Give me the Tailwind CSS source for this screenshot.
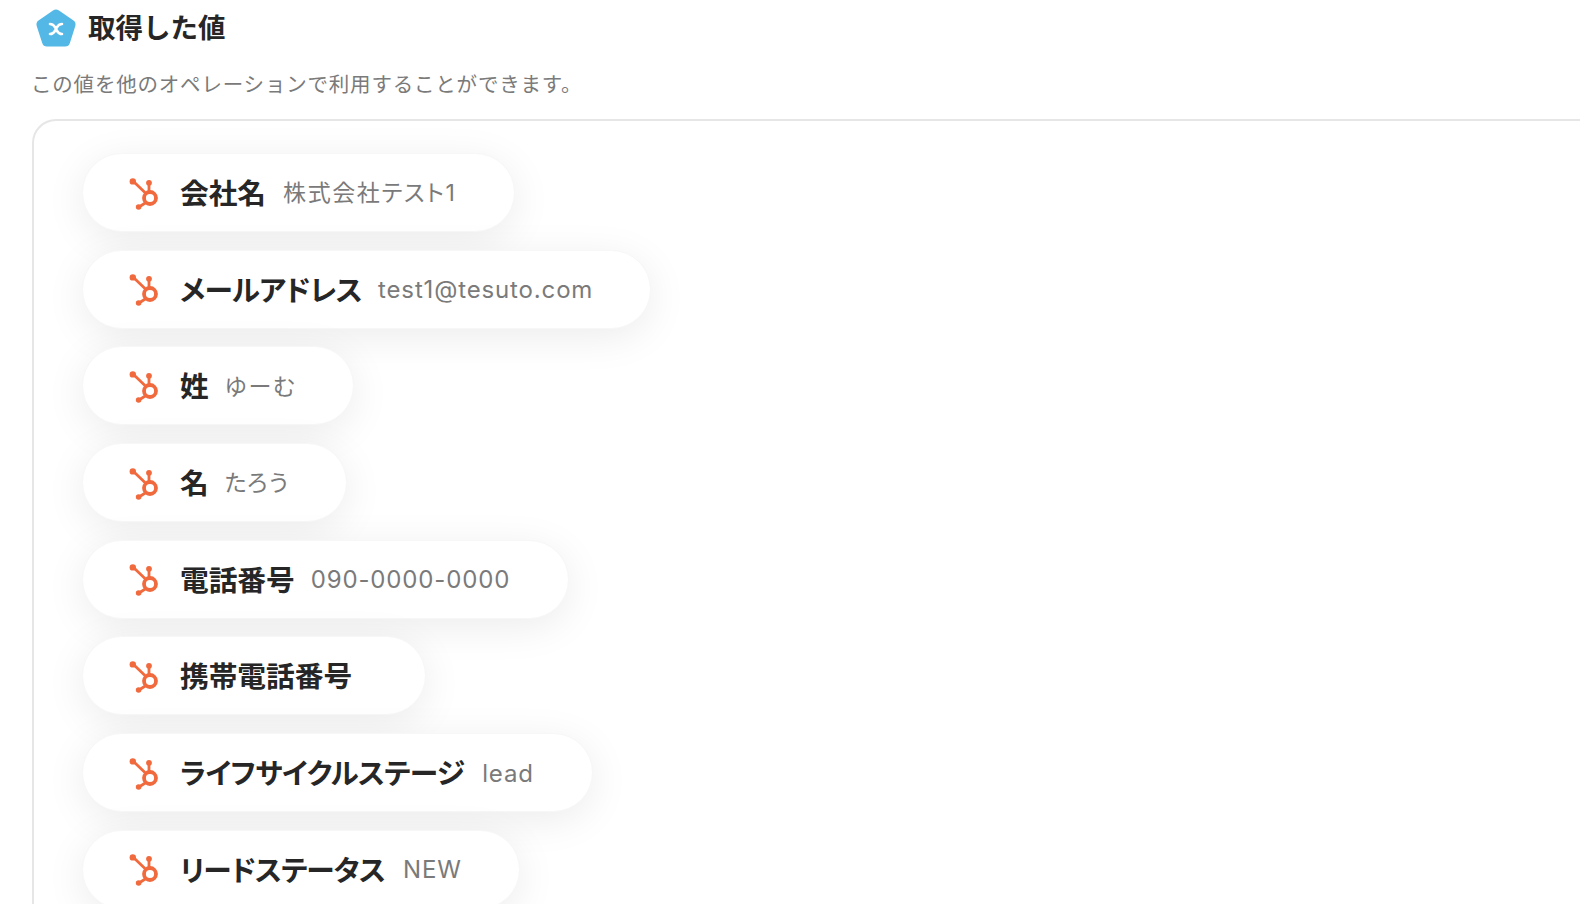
<!DOCTYPE html>
<html lang="ja">
<head>
  <meta charset="UTF-8">
  <title>取得した値</title>
  <script src="https://cdn.jsdelivr.net/npm/@tailwindcss/browser@4"></script>
</head>
<body class="bg-white text-[#262626] font-['Inter','Noto_Sans_CJK_JP',sans-serif] h-[904px] overflow-hidden">
  <svg class="hidden">
    <symbol id="hubspot" viewBox="0 0 32 32">
      <g fill="none" stroke="#f16a3e" stroke-linecap="round">
        <circle cx="21" cy="20" r="6" stroke-width="3.800"/>
        <path d="M4.500 3.500 17 15.500M20 14V6M17 24.500 10 29" stroke-width="2.800"/>
      </g>
      <g fill="#f16a3e">
        <circle cx="3.800" cy="3.400" r="3.200"/>
        <circle cx="20" cy="4.800" r="2.900"/>
        <circle cx="9.600" cy="29" r="2.800"/>
      </g>
    </symbol>
  </svg>
  <main class="pl-8">
    <h2 class="flex items-center gap-[11px] pl-[3px] h-[56px] pb-[1px] text-[27.500px] font-bold leading-none">
      <svg class="w-[42px] h-[40px]" viewBox="0 0 42 40">
        <path d="M18 2.600a5 5 0 0 1 6 0l14.500 10a5 5 0 0 1 1.800 5.400l-5.400 17a5 5 0 0 1-4.800 3.600H12a5 5 0 0 1-4.800-3.600L1.700 18a5 5 0 0 1 1.800-5.400Z" fill="#53b8e6"/>
        <path d="M15 16c4 0 4.500 2.500 6 5s2 5 6 5M27 16c-4 0-4.500 2.500-6 5s-2 5-6 5" fill="none" stroke="#fff" stroke-width="2.600" stroke-linecap="round"/>
      </svg>
      <span class="pt-[2px]">取得した値</span>
    </h2>
    <p class="mt-[15px] -ml-[1px] text-[20.500px] leading-[28px] tracking-[0.8px] text-[#7a7a7a]">この値を他のオペレーションで利用することができます。</p>
    <section class="mt-[20px] h-[900px] border-2 border-r-0 border-[#e6e6e6] rounded-l-[24px] pl-[48px] pt-[32px] flex flex-col items-start gap-[17.700px] [font-feature-settings:'palt']">
      <div class="h-[79px] pt-[2px] pl-[46px] flex items-center rounded-full bg-white border border-[#f7f7f7] shadow-[0_8px_40px_rgba(0,0,0,0.08)] w-[433px]">
        <svg class="w-[32px] h-[32px] shrink-0"><use href="#hubspot"/></svg>
        <span class="ml-[19px] text-[28.700px] font-bold">会社名</span>
        <span class="ml-[17px] text-[23px] tracking-[1.600px] text-[#7a7a7a]">株式会社テスト1</span>
      </div>
      <div class="h-[79px] pt-[2px] pl-[46px] flex items-center rounded-full bg-white border border-[#f7f7f7] shadow-[0_8px_40px_rgba(0,0,0,0.08)] w-[569px]">
        <svg class="w-[32px] h-[32px] shrink-0"><use href="#hubspot"/></svg>
        <span class="ml-[19px] text-[28.700px] font-bold tracking-[-0.700px]">メールアドレス</span>
        <span class="ml-[16px] text-[24px] tracking-[0.850px] text-[#7a7a7a]">test1@tesuto.com</span>
      </div>
      <div class="h-[79px] pt-[2px] pl-[46px] flex items-center rounded-full bg-white border border-[#f7f7f7] shadow-[0_8px_40px_rgba(0,0,0,0.08)] w-[272px]">
        <svg class="w-[32px] h-[32px] shrink-0"><use href="#hubspot"/></svg>
        <span class="ml-[19px] text-[28.700px] font-bold">姓</span>
        <span class="ml-[16px] text-[23px] tracking-[1.700px] text-[#7a7a7a]">ゆーむ</span>
      </div>
      <div class="h-[79px] pt-[2px] pl-[46px] flex items-center rounded-full bg-white border border-[#f7f7f7] shadow-[0_8px_40px_rgba(0,0,0,0.08)] w-[265px]">
        <svg class="w-[32px] h-[32px] shrink-0"><use href="#hubspot"/></svg>
        <span class="ml-[19px] text-[28.700px] font-bold">名</span>
        <span class="ml-[16px] text-[23px] tracking-[1.700px] text-[#7a7a7a]">たろう</span>
      </div>
      <div class="h-[79px] pt-[2px] pl-[46px] flex items-center rounded-full bg-white border border-[#f7f7f7] shadow-[0_8px_40px_rgba(0,0,0,0.08)] w-[487px]">
        <svg class="w-[32px] h-[32px] shrink-0"><use href="#hubspot"/></svg>
        <span class="ml-[19px] text-[28.700px] font-bold">電話番号</span>
        <span class="ml-[16px] text-[24px] tracking-[0.850px] text-[#7a7a7a]">090-0000-0000</span>
      </div>
      <div class="h-[79px] pt-[2px] pl-[46px] flex items-center rounded-full bg-white border border-[#f7f7f7] shadow-[0_8px_40px_rgba(0,0,0,0.08)] w-[344px]">
        <svg class="w-[32px] h-[32px] shrink-0"><use href="#hubspot"/></svg>
        <span class="ml-[19px] text-[28.700px] font-bold">携帯電話番号</span>
      </div>
      <div class="h-[79px] pt-[2px] pl-[46px] flex items-center rounded-full bg-white border border-[#f7f7f7] shadow-[0_8px_40px_rgba(0,0,0,0.08)] w-[511px]">
        <svg class="w-[32px] h-[32px] shrink-0"><use href="#hubspot"/></svg>
        <span class="ml-[19px] text-[28.700px] font-bold tracking-[-0.640px]">ライフサイクルステージ</span>
        <span class="ml-[18px] text-[24px] tracking-[0.850px] text-[#7a7a7a]">lead</span>
      </div>
      <div class="h-[79px] pt-[2px] pl-[46px] flex items-center rounded-full bg-white border border-[#f7f7f7] shadow-[0_8px_40px_rgba(0,0,0,0.08)] w-[438px]">
        <svg class="w-[32px] h-[32px] shrink-0"><use href="#hubspot"/></svg>
        <span class="ml-[19px] text-[28.700px] font-bold tracking-[-0.880px]">リードステータス</span>
        <span class="ml-[18px] text-[24px] tracking-[0.850px] text-[#7a7a7a]">NEW</span>
      </div>
    </section>
  </main>
</body>
</html>
